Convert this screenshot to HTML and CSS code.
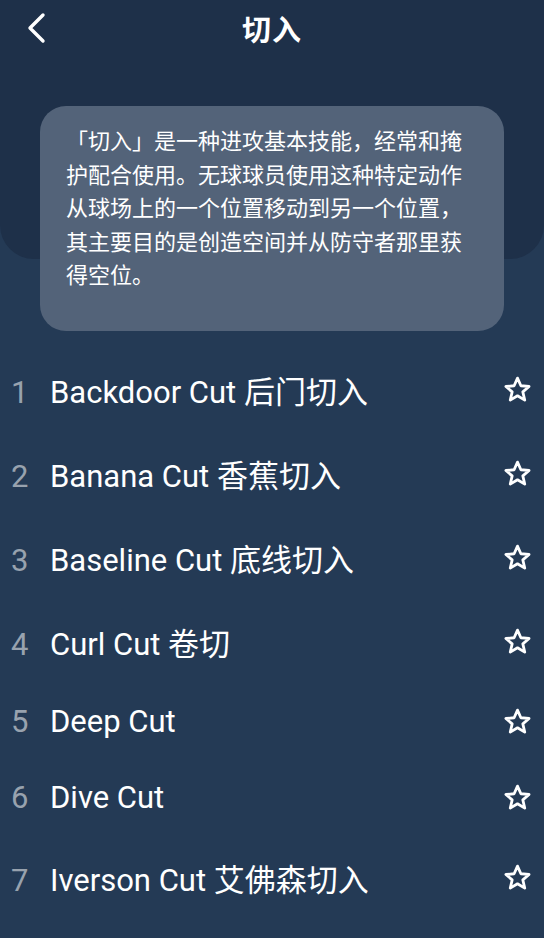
FILE: index.html
```html
<!DOCTYPE html>
<html lang="zh-CN">
<head>
  <meta charset="UTF-8" />
  <meta name="viewport" content="width=device-width, initial-scale=1.0"/>
  <title>切入</title>
  <link rel="stylesheet" href="styles.css">
</head>
<body>
  <header class="hero">
    <div class="topbar">
      <button class="back" aria-label="返回">
        <svg width="22" height="32" viewBox="0 0 22 32"><path d="M18 3 L5 16 L18 29" fill="none" stroke="#fff" stroke-width="3.4" stroke-linecap="round" stroke-linejoin="round"/></svg>
      </button>
      <h1>切入</h1>
    </div>

    <section class="intro-card">
      <p>「切入」是一种进攻基本技能，经常和掩护配合使用。无球球员使用这种特定动作从球场上的一个位置移动到另一个位置，其主要目的是创造空间并从防守者那里获得空位。</p>
    </section>
  </header>

  <ul class="cut-list">
    <li><span class="num">1</span><span class="name">Backdoor Cut 后门切入</span><span class="star"></span></li>
    <li><span class="num">2</span><span class="name">Banana Cut 香蕉切入</span><span class="star"></span></li>
    <li><span class="num">3</span><span class="name">Baseline Cut 底线切入</span><span class="star"></span></li>
    <li><span class="num">4</span><span class="name">Curl Cut 卷切</span><span class="star"></span></li>
    <li><span class="num">5</span><span class="name">Deep Cut</span><span class="star"></span></li>
    <li><span class="num">6</span><span class="name">Dive Cut</span><span class="star"></span></li>
    <li><span class="num">7</span><span class="name">Iverson Cut 艾佛森切入</span><span class="star"></span></li>
  </ul>

  <script>
    // same outline star for every row
    const starSvg = '<svg width="29" height="29" viewBox="0 0 24 24"><polygon points="12,2.6 14.8,8.9 21.6,9.5 16.4,14 18,20.8 12,17.2 6,20.8 7.6,14 2.4,9.5 9.2,8.9" fill="none" stroke="#fff" stroke-width="2.3" stroke-linejoin="round"/></svg>';
    document.querySelectorAll('.cut-list .star').forEach(el => {
      el.innerHTML = starSvg;
    });
  </script>
</body>
</html>
```

FILE: styles.css
```css
* {
  box-sizing: border-box;
}

body {
  margin: 0;
  background-color: #243a55;
  color: #ffffff;
  font-family: Roboto, "Noto Sans CJK SC", sans-serif;
}

.hero {
  display: flex;
  flex-direction: column;
  background-color: #1e3049;
  border-radius: 0 0 34px 34px;
}

.topbar {
  display: grid;
  grid-template-columns: 1fr auto 1fr;
  align-items: center;
  height: 56px;
}

.back {
  justify-self: start;
  display: flex;
  margin-left: 25px;
  padding: 0;
  border: 0;
  background: none;
  cursor: pointer;
}

.topbar h1 {
  margin: 0;
  font-family: "Noto Sans CJK SC", sans-serif;
  font-size: 29px;
  font-weight: 700;
  letter-spacing: 1px;
}

.intro-card {
  margin: 50px 40px -72px;
  padding: 17px 26px 40px;
  background-color: #536379;
  border-radius: 26px;
}

.intro-card p {
  margin: 0;
  font-family: "Noto Sans CJK SC", sans-serif;
  font-size: 22px;
  line-height: 33.5px;
}

.cut-list {
  list-style: none;
  margin: 89px 0 0;
  padding: 0;
}

.cut-list li {
  display: grid;
  grid-template-columns: 39px 1fr auto;
  align-items: baseline;
  padding: 19.5px 12px 19.5px 11px;
  font-size: 31px;
}

.cut-list .num {
  color: #98a2ae;
}

.cut-list .star {
  display: flex;
  align-self: center;
}
```
